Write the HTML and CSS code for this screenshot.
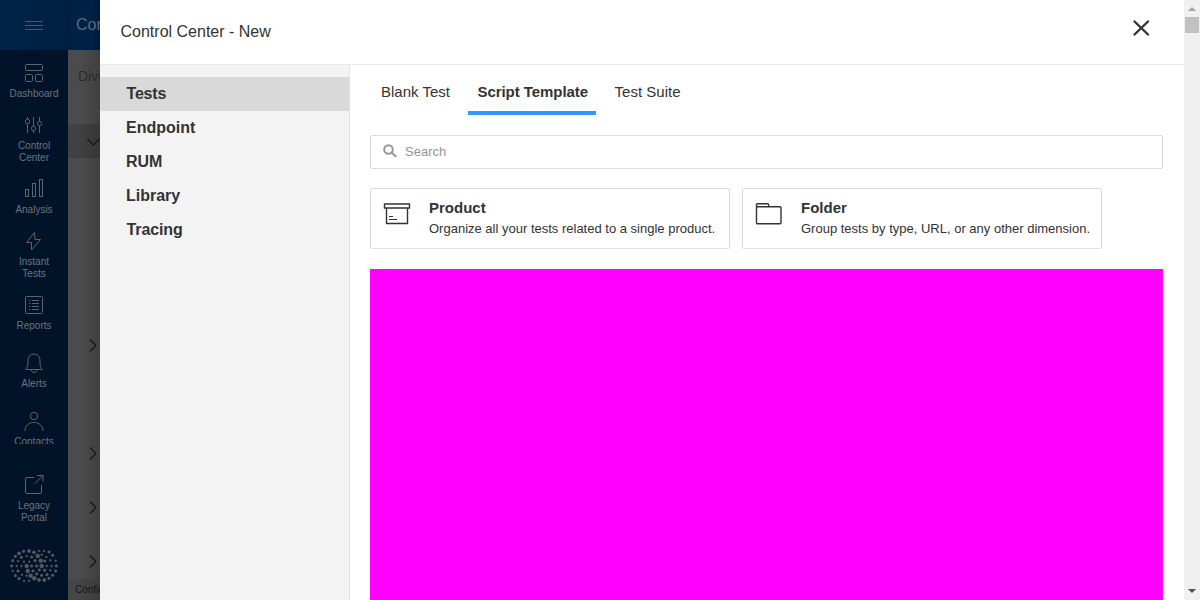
FILE: index.html
```
<!DOCTYPE html>
<html lang="en">
<head>
<meta charset="utf-8">
<title>Control Center</title>
<link rel="stylesheet" href="styles.css">
</head>
<body>
<div class="app">
  <header class="topbar">
    <div class="burger"><svg width="18" height="10" viewBox="0 0 18 10"><path d="M0 .5h18M0 4.500h18M0 8.500h18"/></svg></div>
    <span class="topbar-title">Control Center</span>
  </header>
  <div class="body">
    <nav class="rail">
      <div class="rail-list">
        <a class="rail-item"><svg viewBox="0 0 20 20"><rect x="1.500" y=".5" width="17" height="6" rx="1.200"/><rect x="1.500" y="10.500" width="7" height="7" rx="1.200"/><rect x="11.500" y="10.500" width="7" height="7" rx="1.200"/></svg><span>Dashboard</span></a>
        <a class="rail-item"><svg viewBox="0 0 20 20"><path d="M3.500 1v2M3.500 8v9M9.500 1v9M9.500 15v2M15.500 1v4M15.500 10v7"/><circle cx="3.500" cy="5.500" r="2.200"/><circle cx="9.500" cy="12.500" r="2.200"/><circle cx="15.500" cy="7.500" r="2.200"/></svg><span>Control<br>Center</span></a>
        <a class="rail-item"><svg viewBox="0 0 20 20"><rect x="1.500" y="9.500" width="3" height="7"/><rect x="8.500" y="3.500" width="3" height="13"/><rect x="15.500" y="-.5" width="3" height="17"/></svg><span>Analysis</span></a>
        <a class="rail-item"><svg viewBox="0 0 20 20"><path d="M10.500 .5L2.500 10.500H7.500V18L16.500 7.500H11z"/></svg><span>Instant<br>Tests</span></a>
        <a class="rail-item"><svg viewBox="0 0 20 20"><rect x="1.500" y=".5" width="17" height="17" rx="1"/><path d="M8 4.500h7M8 7.500h7M8 10.500h7M8 13.500h7M5 4.500h1.500M5 7.500h1.500M5 10.500h1.500M5 13.500h1.500"/></svg><span>Reports</span></a>
        <a class="rail-item far"><svg viewBox="0 0 20 20"><path d="M2 15.500C1 14.500 4 13.500 4 10V6a6 6 0 0 1 12 0v4c0 3.500 3 4.500 2 5.500zM7 15.500c.5 4 5.500 4 6 0"/></svg><span>Alerts</span></a>
        <a class="rail-item far"><svg viewBox="0 0 20 20"><circle cx="10" cy="4" r="3.700"/><path d="M1 19c0-11.500 18-11.500 18 0"/></svg><span>Contacts</span></a>
      </div>
      <a class="rail-item legacy"><svg viewBox="0 0 20 20"><path d="M10 1.500H3A1.500 1.500 0 0 0 1.500 3v13A1.500 1.500 0 0 0 3 17.500h13a1.500 1.500 0 0 0 1.500-1.500V9M13 -.5h6v6M19 -.5l-8 8"/></svg><span>Legacy<br>Portal</span></a>
      <svg class="logo" viewBox="0 0 144 102">
        <circle cx="41" cy="7" r="4"/><circle cx="57" cy="6" r="5"/><circle cx="72" cy="10" r="5"/><circle cx="87" cy="6" r="3"/><circle cx="102" cy="6" r="3"/><circle cx="117" cy="9" r="4"/>
        <circle cx="27" cy="13" r="5"/><circle cx="16" cy="22" r="4"/><circle cx="34" cy="25" r="4"/><circle cx="50" cy="21" r="3"/><circle cx="65" cy="24" r="4"/><circle cx="83" cy="21" r="6"/><circle cx="95" cy="17" r="3"/><circle cx="109" cy="24" r="3"/><circle cx="128" cy="19" r="4"/>
        <circle cx="8" cy="35" r="4"/><circle cx="24" cy="36" r="3"/><circle cx="42" cy="38" r="3"/><circle cx="58" cy="38" r="3"/><circle cx="75" cy="35" r="4"/><circle cx="92" cy="35" r="6"/><circle cx="104" cy="36" r="4"/><circle cx="121" cy="34" r="3"/><circle cx="137" cy="35" r="3"/>
        <circle cx="5" cy="51" r="4"/><circle cx="20" cy="51" r="3"/><circle cx="34" cy="51" r="3"/><circle cx="50" cy="51" r="6"/><circle cx="65" cy="51" r="4"/><circle cx="80" cy="51" r="4"/><circle cx="95" cy="51" r="6"/><circle cx="110" cy="51" r="3"/><circle cx="125" cy="51" r="3"/><circle cx="139" cy="51" r="4"/>
        <circle cx="8" cy="66" r="3"/><circle cx="24" cy="66" r="4"/><circle cx="53" cy="66" r="6"/><circle cx="69" cy="66" r="4"/><circle cx="88" cy="63" r="4"/><circle cx="104" cy="64" r="4"/><circle cx="121" cy="64" r="3"/><circle cx="137" cy="66" r="4"/>
        <circle cx="16" cy="80" r="4"/><circle cx="36" cy="77" r="3"/><circle cx="50" cy="80" r="3"/><circle cx="62" cy="80" r="6"/><circle cx="80" cy="75" r="4"/><circle cx="95" cy="79" r="4"/><circle cx="111" cy="77" r="4"/><circle cx="128" cy="79" r="4"/>
        <circle cx="27" cy="89" r="4"/><circle cx="42" cy="96" r="3"/><circle cx="57" cy="95" r="3"/><circle cx="73" cy="88" r="6"/><circle cx="87" cy="93" r="5"/><circle cx="103" cy="93" r="5"/><circle cx="117" cy="88" r="4"/>
      </svg>
    </nav>
    <main class="page">
      <div class="division">Division</div>
      <div class="table-head"><svg width="14" height="14" viewBox="0 0 14 14"><path d="M1.500 5l6 6 6-6"/></svg></div>
      <div class="rows">
        <div class="row first"><svg width="14" height="14" viewBox="0 0 14 14"><path d="M4 1.500l6 6-6 6"/></svg></div>
        <div class="row tall"><svg width="14" height="14" viewBox="0 0 14 14"><path d="M4 1.500l6 6-6 6"/></svg></div>
        <div class="row"><svg width="14" height="14" viewBox="0 0 14 14"><path d="M4 1.500l6 6-6 6"/></svg></div>
        <div class="row"><svg width="14" height="14" viewBox="0 0 14 14"><path d="M4 1.500l6 6-6 6"/></svg></div>
      </div>
      <footer class="page-foot">Confidential</footer>
    </main>
  </div>

  <section class="drawer">
    <div class="drawer-main">
      <header class="drawer-head">
        <h1>Control Center - New</h1>
        <svg class="close" width="18" height="18" viewBox="0 0 18 18"><path d="M2.500 2.500l13.500 13M16 2.500L2.500 15.500"/></svg>
      </header>
      <div class="drawer-body">
        <ul class="menu">
          <li class="active">Tests</li><li>Endpoint</li><li>RUM</li><li>Library</li><li>Tracing</li>
        </ul>
        <div class="content">
          <div class="tabs"><span class="tab">Blank Test</span><span class="tab selected">Script Template</span><span class="tab">Test Suite</span></div>
          <div class="search"><svg width="15" height="15" viewBox="0 0 15 15"><circle cx="5.500" cy="5.500" r="4.300"/><path d="M8.700 8.700l4.600 4"/></svg><span>Search</span></div>
          <div class="cards">
            <div class="card">
              <svg width="28" height="24" viewBox="0 0 28 24"><path d="M1.500 2h25v4h-25zM3.500 6v15.500h21V6"/><path class="thin" d="M6 14.500h4M6 17.500h8"/></svg>
              <div><h2>Product</h2><p>Organize all your tests related to a single product.</p></div>
            </div>
            <div class="card">
              <svg width="28" height="24" viewBox="0 0 28 24"><path d="M1.500 20.800V2.800a1 1 0 0 1 1-1h10.500l1.500 3H25a1 1 0 0 1 1 1v15a1 1 0 0 1-1 1H2.500a1 1 0 0 1-1-1M1.500 4.800h13"/></svg>
              <div><h2>Folder</h2><p>Group tests by type, URL, or any other dimension.</p></div>
            </div>
          </div>
          <div class="panel"></div>
        </div>
      </div>
    </div>
    <div class="scrollbar">
      <svg width="16" height="17" viewBox="0 0 16 17"><path d="M4 11l4-4 4 4z" fill="#a3a3a3"/></svg>
      <div class="thumb"></div>
      <svg class="down" width="16" height="17" viewBox="0 0 16 17"><path d="M4 6h8l-4 4z" fill="#505050"/></svg>
    </div>
  </section>
</div>
</body>
</html>
```
FILE: styles.css
```
* { box-sizing: border-box; }
body { margin: 0; font-family: "Liberation Sans", Arial, sans-serif; color: #333; }
h1, h2, p, ul { margin: 0; padding: 0; font-weight: 400; }
svg { display: block; flex: none; fill: none; overflow: visible; }

.app { position: relative; height: 600px; overflow: hidden; display: flex; flex-direction: column; }
.topbar { display: flex; align-items: center; width: 100px; height: 50px; flex: none; overflow: hidden; background: linear-gradient(90deg, #00234a, #001f40 68px, #00234a 90px, #00183a 100px); }
.burger { width: 68px; flex: none; display: flex; justify-content: center; padding-top: 2px; }
.burger svg { stroke: #4c5761; stroke-width: 1; }
.topbar-title { width: 32px; overflow: hidden; padding-left: 8px; font-size: 16px; color: #5f6a75; white-space: nowrap; }
.body { display: flex; flex: 1; min-height: 0; }

.rail { width: 68px; flex: none; background: #001329; display: flex; flex-direction: column; align-items: center; }
.rail-list { height: 394px; width: 100%; padding-top: 14px; overflow: hidden; display: flex; flex-direction: column; gap: 16px; }
.rail-item { display: flex; flex: none; flex-direction: column; align-items: center; gap: 4px; font-size: 10px; line-height: 12px; text-align: center; color: #6b747d; }
.rail-item svg { width: 20px; height: 20px; stroke: #5b6670; stroke-width: 1; }
.rail-item.far { margin-top: 6px; }
.legacy { margin-top: 32px; }
.logo { width: 48px; height: 34px; margin-top: 25px; fill: #5a5b5f; stroke: #5a5b5f; stroke-width: 1.2; }

.page { width: 32px; flex: none; overflow: hidden; background: linear-gradient(90deg, #4b4b4b 14px, #3f3f3f 32px); display: flex; flex-direction: column; }
.division { height: 74px; padding: 18px 0 0 10px; font-size: 14px; line-height: 17px; color: #2b2b2b; }
.table-head { height: 34px; padding: 10px 0 0 18px; background: linear-gradient(90deg, #414141 10px, #363636 32px); }
.table-head svg, .row svg { stroke: #151515; stroke-width: 1.2; }
.rows { flex: 1; display: flex; flex-direction: column; padding-left: 18px; }
.row { height: 54px; padding-top: 40px; }
.row.first { height: 194px; padding-top: 180px; }
.row.tall { height: 108px; padding-top: 94px; }
.page-foot { height: 21px; padding-left: 7px; font-size: 10px; line-height: 21px; color: #171717; background: linear-gradient(90deg, #464646 8px, #3b3b3b 32px); }

.drawer { position: absolute; inset: 0 0 0 100px; display: flex; background: #fff; }
.drawer-main { flex: 1; display: flex; flex-direction: column; }
.drawer-head { display: flex; justify-content: space-between; height: 65px; flex: none; padding: 19px 34px 0 20.5px; border-bottom: 1px solid #e8e8e8; }
.drawer-head h1 { padding-top: 1px; font-size: 16px; line-height: 24px; }
.close { stroke: #333; stroke-width: 2.400; stroke-linecap: round; }
.drawer-body { flex: 1; display: flex; }
.menu { width: 250px; padding-top: 12px; background: #f3f3f3; border-right: 1px solid #e2e2e2; list-style: none; }
.menu li { height: 34px; padding-left: 26px; font-size: 16px; line-height: 33px; font-weight: 700; }
.menu .active { background: #d9d9d9; border-radius: 2px 0 0 2px; padding-left: 26.5px; letter-spacing: -.2px; }
.menu li:last-child { padding-left: 26.5px; letter-spacing: -.1px; }

.content { flex: 1; display: flex; flex-direction: column; padding: 3px 21px 0 20px; }
.tabs { display: flex; gap: 10px; height: 47px; }
.tab { padding: 0 8px; font-size: 15px; line-height: 47px; white-space: nowrap; }
.tab:first-child { padding-left: 11px; }
.tab.selected { padding: 0 7.500px 0 9.500px; margin-right: 1px; letter-spacing: -.05px; font-weight: 700; border-bottom: 4px solid #3296ff; }
.search { display: flex; align-items: center; gap: 7px; height: 34px; margin-top: 20px; padding: 0 0 2px 12px; border: 1px solid #d9d9d9; border-radius: 2px; font-size: 13px; color: #969696; }
.search svg { stroke: #969696; stroke-width: 2; }
.cards { display: flex; gap: 12px; margin-top: 19px; }
.card { width: 360px; height: 61px; display: flex; gap: 18px; padding: 13px 0 0 12px; border: 1px solid #d9d9d9; border-bottom-color: #e3e3e3; border-radius: 2px; white-space: nowrap; }
.card svg { stroke: #333; stroke-width: 1.400; }
.card .thin { stroke-width: 1; }
.card h2 { margin-top: -4px; font-size: 15px; line-height: 20px; font-weight: 700; }
.card p { padding-top: 1px; font-size: 13px; line-height: 20px; }
.panel { flex: 1; margin-top: 20px; background: #f0f; }

.scrollbar { width: 16px; flex: none; display: flex; flex-direction: column; background: #f0f0f0; }
.thumb { height: 16px; margin: 0 1px; background: #c1c1c1; }
.down { margin-top: auto; }
```
